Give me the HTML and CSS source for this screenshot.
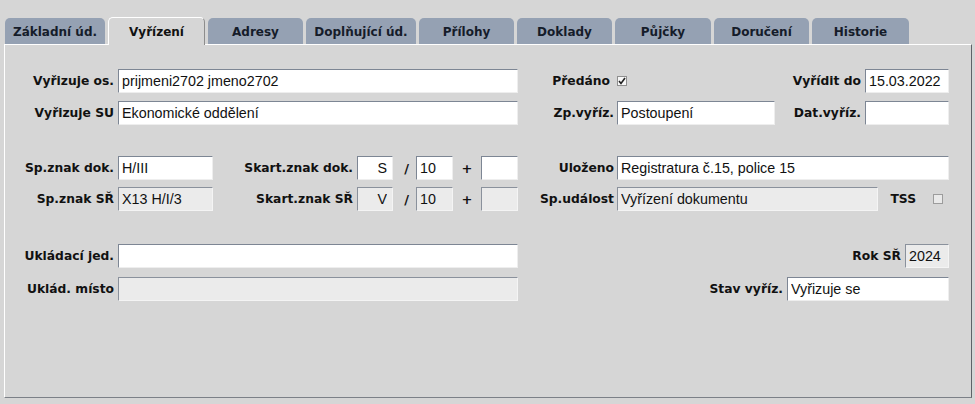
FILE: index.html
```html
<!DOCTYPE html>
<html lang="cs">
<head>
    <meta charset="UTF-8">
    <title>Vyřízení</title>
    <link rel="stylesheet" href="styles.css">
</head>
<body>
    <div class="tabs">
        <div class="tab t1">Základní úd.</div>
        <div class="tab t2 active">Vyřízení</div>
        <div class="tab t3">Adresy</div>
        <div class="tab t4">Doplňující úd.</div>
        <div class="tab t5">Přílohy</div>
        <div class="tab t6">Doklady</div>
        <div class="tab t7">Půjčky</div>
        <div class="tab t8">Doručení</div>
        <div class="tab t9">Historie</div>
    </div>

    <div class="panel">
        <!-- vyřizovatel -->
        <div class="row r1">
            <label class="lbl lbl-a">Vyřizuje os.</label>
            <input class="fld f-wide" type="text" value="prijmeni2702 jmeno2702" readonly>
            <label class="lbl lbl-c pad">Předáno</label>
            <span class="check on"><svg width="8" height="8" viewBox="0 0 8 8"><path d="M1 4 L3 6.5 L7 1" fill="none" stroke="#222" stroke-width="1.6"/></svg></span>
            <div class="end">
                <label class="lbl">Vyřídit do</label>
                <input class="fld f-date" type="text" value="15.03.2022" readonly>
            </div>
        </div>
        <div class="row r2">
            <label class="lbl lbl-a">Vyřizuje SU</label>
            <input class="fld f-wide" type="text" value="Ekonomické oddělení" readonly>
            <label class="lbl lbl-c">Zp.vyříz.</label>
            <input class="fld f-zp" type="text" value="Postoupení" readonly>
            <div class="end">
                <label class="lbl">Dat.vyříz.</label>
                <input class="fld f-date" type="text" value="" readonly>
            </div>
        </div>

        <!-- spisové a skartační znaky -->
        <div class="row r3">
            <label class="lbl lbl-a">Sp.znak dok.</label>
            <input class="fld f-short" type="text" value="H/III" readonly>
            <label class="lbl lbl-b">Skart.znak dok.</label>
            <input class="fld f-tiny right" type="text" value="S" readonly>
            <span class="sep slash">/</span>
            <input class="fld f-tiny2" type="text" value="10" readonly>
            <span class="sep plus">+</span>
            <input class="fld f-tiny2" type="text" value="" readonly>
            <label class="lbl lbl-c">Uloženo</label>
            <input class="fld f-ulozeno" type="text" value="Registratura č.15, police 15" readonly>
        </div>
        <div class="row r4">
            <label class="lbl lbl-a">Sp.znak SŘ</label>
            <input class="fld f-short grey" type="text" value="X13 H/I/3" readonly>
            <label class="lbl lbl-b">Skart.znak SŘ</label>
            <input class="fld f-tiny right grey" type="text" value="V" readonly>
            <span class="sep slash">/</span>
            <input class="fld f-tiny2 grey" type="text" value="10" readonly>
            <span class="sep plus">+</span>
            <input class="fld f-tiny2 grey" type="text" value="" readonly>
            <label class="lbl lbl-c">Sp.událost</label>
            <input class="fld f-udalost grey" type="text" value="Vyřízení dokumentu" readonly>
            <div class="end">
                <label class="lbl tss">TSS</label>
                <span class="check off"></span>
            </div>
        </div>

        <!-- uložení -->
        <div class="row r5">
            <label class="lbl lbl-a">Ukládací jed.</label>
            <input class="fld f-wide" type="text" value="" readonly>
            <div class="end">
                <label class="lbl">Rok SŘ</label>
                <input class="fld f-rok grey" type="text" value="2024" readonly>
            </div>
        </div>
        <div class="row r6">
            <label class="lbl lbl-a">Uklád. místo</label>
            <input class="fld f-wide grey" type="text" value="" readonly>
            <div class="end">
                <label class="lbl">Stav vyříz.</label>
                <input class="fld f-stav" type="text" value="Vyřizuje se" readonly>
            </div>
        </div>
    </div>
</body>
</html>
```

FILE: styles.css
```css
body {
    margin: 0;
    background: #d6d6d6;
    font-family: "DejaVu Sans", Verdana, sans-serif;
    width: 975px;
    height: 404px;
    overflow: hidden;
}
.tabs {
    display: flex;
    align-items: flex-end;
    gap: 3px;
    padding: 17px 0 0 5px;
    height: 27px;
    position: relative;
    z-index: 1;
}
.tab {
    height: 26px;
    box-sizing: border-box;
    background: #95a1b3;
    border-radius: 5px 5px 0 0;
    font-size: 12px;
    font-weight: bold;
    color: #151c2a;
    display: flex;
    align-items: center;
    justify-content: center;
    padding-top: 1px;
}
.tab.active {
    height: 28px;
    margin-bottom: -1px;
    background: #d6d6d6;
    border: 1px solid #fff;
    border-bottom: none;
    border-right-color: #8d8d8d;
    color: #111;
}
.t1 { width: 100px; }
.t2 { width: 97px; }
.t3 { width: 95px; }
.t4 { width: 110px; }
.t5 { width: 95px; }
.t6 { width: 95px; }
.t7 { width: 96px; }
.t8 { width: 95px; }
.t9 { width: 97px; }

.panel {
    margin-left: 4px;
    width: 968px;
    height: 354px;
    box-sizing: border-box;
    border: 1px solid #fff;
    border-right-color: #5f6368;
    border-bottom-color: #7c8087;
    padding: 24px 22px 0 0;
}
.row {
    display: flex;
    align-items: center;
    height: 24px;
}
.r1 { margin-bottom: 8px; }
.r2 { margin-bottom: 31px; }
.r3 { margin-bottom: 7px; }
.r4 { margin-bottom: 33px; }
.r5 { margin-bottom: 9px; }

.lbl {
    font-size: 12.3px;
    font-weight: bold;
    color: #111;
    white-space: nowrap;
    margin-right: 4px;
}
.lbl-a { width: 109px; text-align: right; }
.lbl-b { width: 140px; text-align: right; }
.lbl-c { width: 96px; text-align: right; margin-right: 3px; }
.lbl-c.pad { width: 92px; margin-right: 7px; }
.tss { margin-right: 17px; }

.fld {
    height: 24px;
    box-sizing: border-box;
    margin: 0;
    padding: 0 3px;
    border: 1px solid;
    border-color: #7d8694 #eeeeee #eeeeee #7d8694;
    background: #fff;
    font-family: "Liberation Sans", Arial, sans-serif;
    font-size: 14.3px;
    color: #111;
    outline: none;
}
.fld.grey { background: #ebebeb; border-color: #8a919c #f4f4f4 #f4f4f4 #8a919c; }
.fld.right { text-align: right; padding-right: 5px; }
.f-wide { width: 400px; }
.f-short { width: 95px; }
.f-tiny { width: 36px; }
.f-tiny2 { width: 37px; }
.f-zp { width: 158px; }
.f-ulozeno { width: 332px; }
.f-udalost { width: 261px; }
.f-date { width: 84px; }
.f-rok { width: 44px; }
.f-stav { width: 162px; }

.sep {
    font-size: 13px;
    font-weight: bold;
    color: #111;
    text-align: center;
}
.slash { width: 23px; padding-left: 4px; box-sizing: border-box; }
.plus { width: 28px; }

.end {
    margin-left: auto;
    display: flex;
    align-items: center;
}
.check {
    width: 10px;
    height: 10px;
    box-sizing: border-box;
    border: 1px solid #8f8f8f;
    background: #f7f7f7;
    display: flex;
    align-items: center;
    justify-content: center;
}
.check.off { margin-right: 6px; background: #e9e9e9; border-color: #9c9c9c; }
```
